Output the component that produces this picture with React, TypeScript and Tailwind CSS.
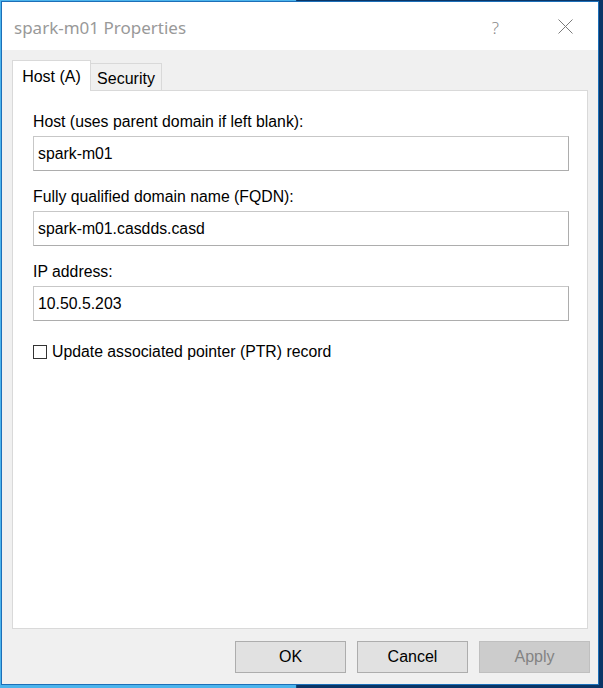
import React from "react";

const body = "font-['Liberation_Sans',Arial,sans-serif]";

const Field = ({ label, value, gap }: { label: string; value: string; gap: string }) => (
  <div className={`flex flex-col ${gap}`}>
    <label className="h-[18px] text-[15.8px] leading-[18px] text-black">{label}</label>
    <div className="mt-[5px] flex h-[35px] w-[536px] items-center border border-[#c7c7c7] border-r-[#adadad] border-b-[#adadad] bg-white pl-[4px] text-[15.8px] text-black">
      {value}
    </div>
  </div>
);

const Btn = ({ children, disabled }: { children: React.ReactNode; disabled?: boolean }) => (
  <button
    className={
      disabled
        ? "flex h-[32px] w-[111px] items-center justify-center border border-[#bfbfbf] bg-[#cccccc] text-[16px] text-[#838383]"
        : "flex h-[32px] w-[111px] items-center justify-center border border-[#adadad] bg-[#e1e1e1] text-[16px] text-black"
    }
  >
    {children}
  </button>
);

export default function App() {
  return (
    <div className="flex h-[688px] w-[603px] bg-[linear-gradient(to_right,#4cb4ec_0%,#4cb4ec_49%,#0a3566_49.2%,#0a3566_100%)] pl-[1px] pt-[1px]">
      <div className={`flex h-[684px] w-[598px] flex-col border border-[#1d6fb8] bg-[#f0f0f0] ${body}`}>
        {/* title bar */}
        <div className="flex h-[48px] items-center bg-white pl-[12px] pt-[4px]">
          <span className="font-['Noto_Sans',sans-serif] text-[17px] text-[#999999]">spark-m01 Properties</span>
          <span className="ml-auto font-['Noto_Sans',sans-serif] text-[17px] font-light text-[#888888]">?</span>
          <svg className="mb-[4px] ml-[59px] mr-[25px]" width="15" height="15" viewBox="0 0 15 15">
            <path d="M0.5 0.5 L14.5 14.5 M14.5 0.5 L0.5 14.5" stroke="#7a7a7a" strokeWidth="1" fill="none" />
          </svg>
        </div>

        {/* tabs */}
        <div className="box-content flex h-[30px] items-end pl-[10px] pt-[10px]">
          <div className="relative z-10 -mb-px flex h-[31px] w-[79px] items-center justify-center border border-b-0 border-[#d9d9d9] bg-white pt-[1px] text-[16px] text-black">
            Host (A)
          </div>
          <div className="flex h-[27px] w-[71px] items-center justify-center border-t border-r border-[#d9d9d9] bg-[#f0f0f0] pt-[4px] text-[16px] text-black">
            Security
          </div>
        </div>

        {/* panel */}
        <div className="ml-[10px] flex h-[539px] w-[576px] flex-col border border-[#d9d9d9] bg-white px-[20px] pt-[22px]">
          <Field label="Host (uses parent domain if left blank):" value="spark-m01" gap="" />
          <Field label="Fully qualified domain name (FQDN):" value="spark-m01.casdds.casd" gap="mt-[17px]" />
          <Field label="IP address:" value="10.50.5.203" gap="mt-[17px]" />
          <div className="mt-[22px] flex items-center">
            <div className="h-[14px] w-[14px] border border-[#333333] bg-white" />
            <span className="ml-[5px] text-[15.8px] leading-[18px] text-black">Update associated pointer (PTR) record</span>
          </div>
        </div>

        {/* buttons */}
        <div className="mt-[12px] flex justify-end gap-[11px] pr-[8px]">
          <Btn>OK</Btn>
          <Btn>Cancel</Btn>
          <Btn disabled>Apply</Btn>
        </div>
      </div>
    </div>
  );
}
